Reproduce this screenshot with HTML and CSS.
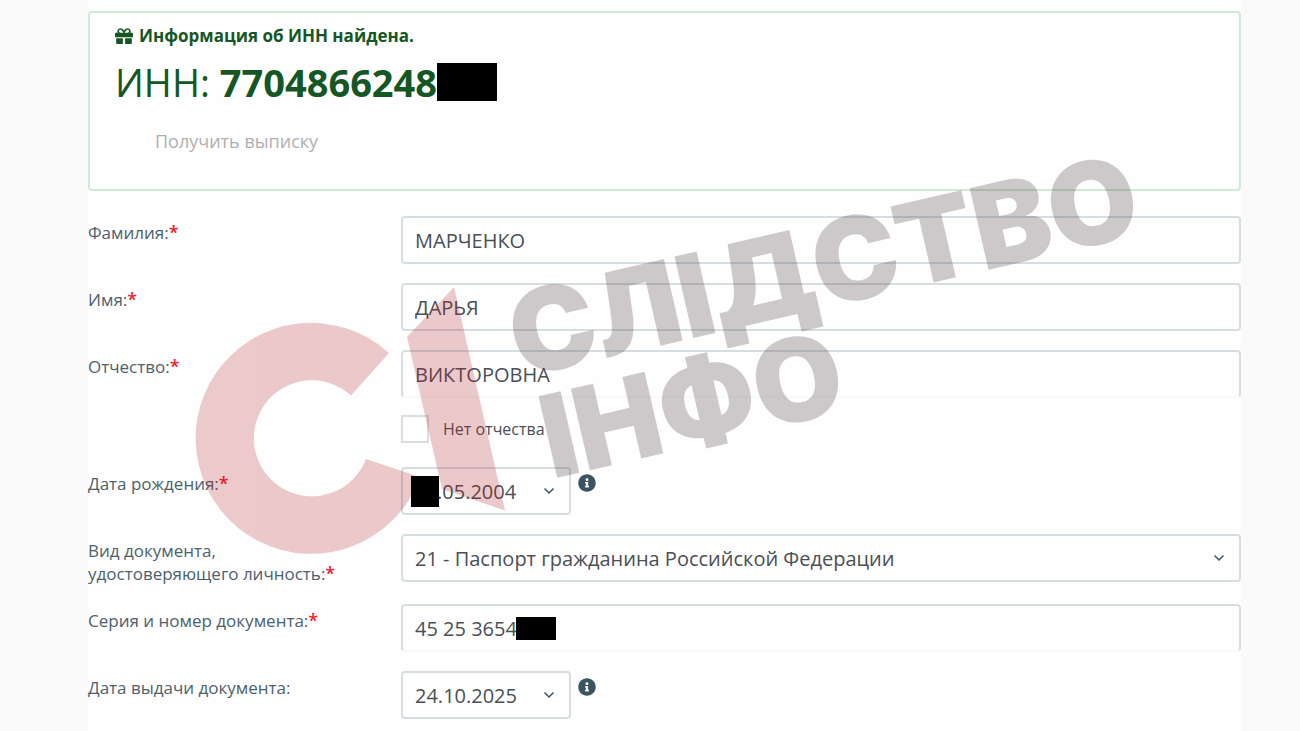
FILE: index.html
```html
<!DOCTYPE html>
<html lang="ru">
<head>
    <meta charset="utf-8">
    <title>Узнать ИНН</title>
    <meta name="viewport" content="width=device-width, initial-scale=1">
    <link rel="stylesheet" href="styles.css">
</head>
<body>
    <main class="panel">
        <section class="result">
            <p class="result-title">
                <svg class="gift" viewBox="0 0 512 512" aria-hidden="true"><path d="M32 448c0 17.7 14.3 32 32 32h160V320H32v128zm256 32h160c17.7 0 32-14.3 32-32V320H288v160zm192-320h-42.1c6.2-12.1 10.1-25.5 10.1-40 0-48.5-39.5-88-88-88-41.6 0-68.5 21.3-103 68.3-34.5-47-61.4-68.3-103-68.3-48.5 0-88 39.5-88 88 0 14.5 3.8 27.9 10.1 40H32c-17.7 0-32 14.3-32 32v80c0 8.8 7.2 16 16 16h480c8.8 0 16-7.2 16-16v-80c0-17.7-14.3-32-32-32zm-326.1 0c-22.1 0-40-17.9-40-40s17.9-40 40-40c19.9 0 34.6 3.3 86.1 80h-86.1zm206.1 0h-86.1c51.4-76.5 65.7-80 86.1-80 22.1 0 40 17.9 40 40s-17.9 40-40 40z"/></svg>
                Информация об ИНН найдена.
            </p>
            <p class="inn">ИНН:&nbsp;<strong>7704866248</strong><span class="inn-mask"></span></p>
            <button type="button" class="extract" disabled>Получить выписку</button>
        </section>

        <form class="form">
            <div class="row">
                <label for="surname">Фамилия:<span class="req">*</span></label>
                <input type="text" class="control" id="surname" value="МАРЧЕНКО">
            </div>

            <div class="row">
                <label for="firstName">Имя:<span class="req">*</span></label>
                <input type="text" class="control" id="firstName" value="ДАРЬЯ">
            </div>

            <div class="row">
                <label for="patronymic">Отчество:<span class="req">*</span></label>
                <div>
                    <input type="text" class="control open-bottom" id="patronymic" value="ВИКТОРОВНА">
                    <div class="check">
                        <input type="checkbox" id="noPatronymic">
                        <label for="noPatronymic">Нет отчества</label>
                    </div>
                </div>
            </div>

            <div class="row">
                <label for="birthDate">Дата рождения:<span class="req">*</span></label>
                <div class="date">
                    <div class="field">
                        <select class="control masked-date" id="birthDate"><option>.05.2004</option></select>
                        <span class="mask date-mask"></span>
                        <svg class="chevron" viewBox="0 0 12 8" aria-hidden="true"><path d="M1.5 1.5 6 6l4.5-4.5"/></svg>
                    </div>
                    <svg class="info" viewBox="0 0 512 512" aria-hidden="true"><path d="M256 8C119 8 8 119 8 256s111 248 248 248 248-111 248-248S393 8 256 8zm0 110c23 0 42 19 42 42s-19 42-42 42-42-19-42-42 19-42 42-42zm56 254c0 7-5 12-12 12h-88c-7 0-12-5-12-12v-24c0-7 5-12 12-12h12v-64h-12c-7 0-12-5-12-12v-24c0-7 5-12 12-12h64c7 0 12 5 12 12v100h12c7 0 12 5 12 12v24z"/></svg>
                </div>
            </div>

            <div class="row">
                <label for="docType">Вид документа,<br>удостоверяющего личность:<span class="req">*</span></label>
                <div class="field">
                    <select class="control" id="docType"><option>21 - Паспорт гражданина Российской Федерации</option></select>
                    <svg class="chevron" viewBox="0 0 12 8" aria-hidden="true"><path d="M1.5 1.5 6 6l4.5-4.5"/></svg>
                </div>
            </div>

            <div class="row">
                <label for="docNumber">Серия и номер документа:<span class="req">*</span></label>
                <div class="field">
                    <input type="text" class="control open-bottom" id="docNumber" value="45 25 3654">
                    <span class="mask number-mask"></span>
                </div>
            </div>

            <div class="row">
                <label for="issueDate">Дата выдачи документа:</label>
                <div class="date">
                    <div class="field">
                        <select class="control" id="issueDate"><option>24.10.2025</option></select>
                        <svg class="chevron" viewBox="0 0 12 8" aria-hidden="true"><path d="M1.5 1.5 6 6l4.5-4.5"/></svg>
                    </div>
                    <svg class="info" viewBox="0 0 512 512" aria-hidden="true"><path d="M256 8C119 8 8 119 8 256s111 248 248 248 248-111 248-248S393 8 256 8zm0 110c23 0 42 19 42 42s-19 42-42 42-42-19-42-42 19-42 42-42zm56 254c0 7-5 12-12 12h-88c-7 0-12-5-12-12v-24c0-7 5-12 12-12h12v-64h-12c-7 0-12-5-12-12v-24c0-7 5-12 12-12h64c7 0 12 5 12 12v100h12c7 0 12 5 12 12v24z"/></svg>
                </div>
            </div>
        </form>

        <!-- watermark over the whole form -->
        <svg class="watermark" viewBox="88 0 1153 731">
            <g class="wm-mark">
                <path d="M389 353A115.500 115.500 0 1 0 420 477L366 459A58 58 0 1 1 351 395.500Z"/>
                <path d="M454 287 407 337 442 489 505 510.500Z"/>
            </g>
            <g class="wm-text">
                <text transform="translate(520 378) rotate(-13)">СЛІДСТВО</text>
                <text transform="translate(552 479) rotate(-13)">ІНФО</text>
            </g>
        </svg>
    </main>
</body>
</html>
```

FILE: styles.css
```css
* {
    box-sizing: border-box;
}
body {
    margin: 0;
    background-color: #fafafb;
    font-family: "Open Sans", "Noto Sans", sans-serif;
    color: #4a5055;
    overflow-x: hidden;
}
.panel {
    position: relative;
    margin: 0 59px 0 88px;
    padding: 11px 0 12px;
    background-color: #fefefe;
}

/* result box */
.result {
    padding: 11px 25px 36px;
    border: 2px solid #cfead5;
    border-radius: 4px;
    color: #155724;
}
.result p {
    display: flex;
    align-items: center;
    margin: 0;
}
.result-title {
    gap: 6px;
    font-size: 17px;
    font-weight: bold;
    line-height: 24px;
}
.gift {
    width: 18px;
    height: 18px;
    fill: #155724;
}
.inn {
    padding: 6px 0;
    font-size: 38px;
    line-height: 56px;
}
.inn-mask {
    width: 60px;
    height: 38px;
    background-color: #000;
}
.extract {
    display: block;
    margin: 13px 0 0 40px;
    padding: 0;
    border: none;
    background: none;
    font: inherit;
    font-size: 18px;
    line-height: 24px;
    color: #b0b0b0;
}

/* form */
.form {
    display: grid;
    gap: 19px;
    margin-top: 25px;
}
.row {
    display: grid;
    grid-template-columns: 313px 1fr;
    align-items: start;
}
.row > label {
    padding-top: 5px;
    font-size: 17px;
    line-height: 23px;
    color: #4c616c;
}
.req {
    font-size: 18px;
    font-weight: 600;
    line-height: 20px;
    color: #f0202a;
}
.control {
    display: block;
    width: 100%;
    height: 48px;
    padding: 0 12px;
    border: 2px solid #d7dee2;
    border-radius: 4px;
    background-color: #fefefe;
    font: inherit;
    font-size: 20px;
    color: #4a5055;
    appearance: none;
}
.open-bottom {
    border-bottom-color: #f8f9fa;
}
.check {
    display: flex;
    align-items: center;
    gap: 14px;
    margin: 17px 0 5px;
    font-size: 16px;
    line-height: 24px;
}
.check input {
    width: 28px;
    height: 28px;
    margin: 0;
    border: 2px solid #d9dfe0;
    background-color: #fefefe;
    appearance: none;
}
.date {
    display: flex;
    gap: 7px;
}
.date .field {
    width: 170px;
}
.field {
    position: relative;
}
.masked-date {
    padding-left: 34px;
}
.info {
    width: 18px;
    height: 18px;
    margin-top: 7px;
    fill: #3c5461;
}
.chevron {
    position: absolute;
    top: 20px;
    right: 16px;
    width: 12px;
    height: 8px;
    fill: none;
    stroke: #3c5461;
    stroke-width: 1.5;
}
.mask {
    position: absolute;
    z-index: 2;
    background-color: #000;
}
.date-mask {
    top: 9px;
    left: 10px;
    width: 28px;
    height: 31px;
}
.number-mask {
    top: 13px;
    left: 115px;
    width: 40px;
    height: 23px;
}

/* watermark */
.watermark {
    position: absolute;
    z-index: 1;
    top: 0;
    left: 0;
    width: 100%;
    pointer-events: none;
}
.wm-mark {
    fill: #b01c24;
    opacity: 0.23;
}
.wm-text {
    fill: #2f1f27;
    opacity: 0.23;
    font-family: Inter, sans-serif;
    font-size: 115px;
    font-weight: 900;
}
```
